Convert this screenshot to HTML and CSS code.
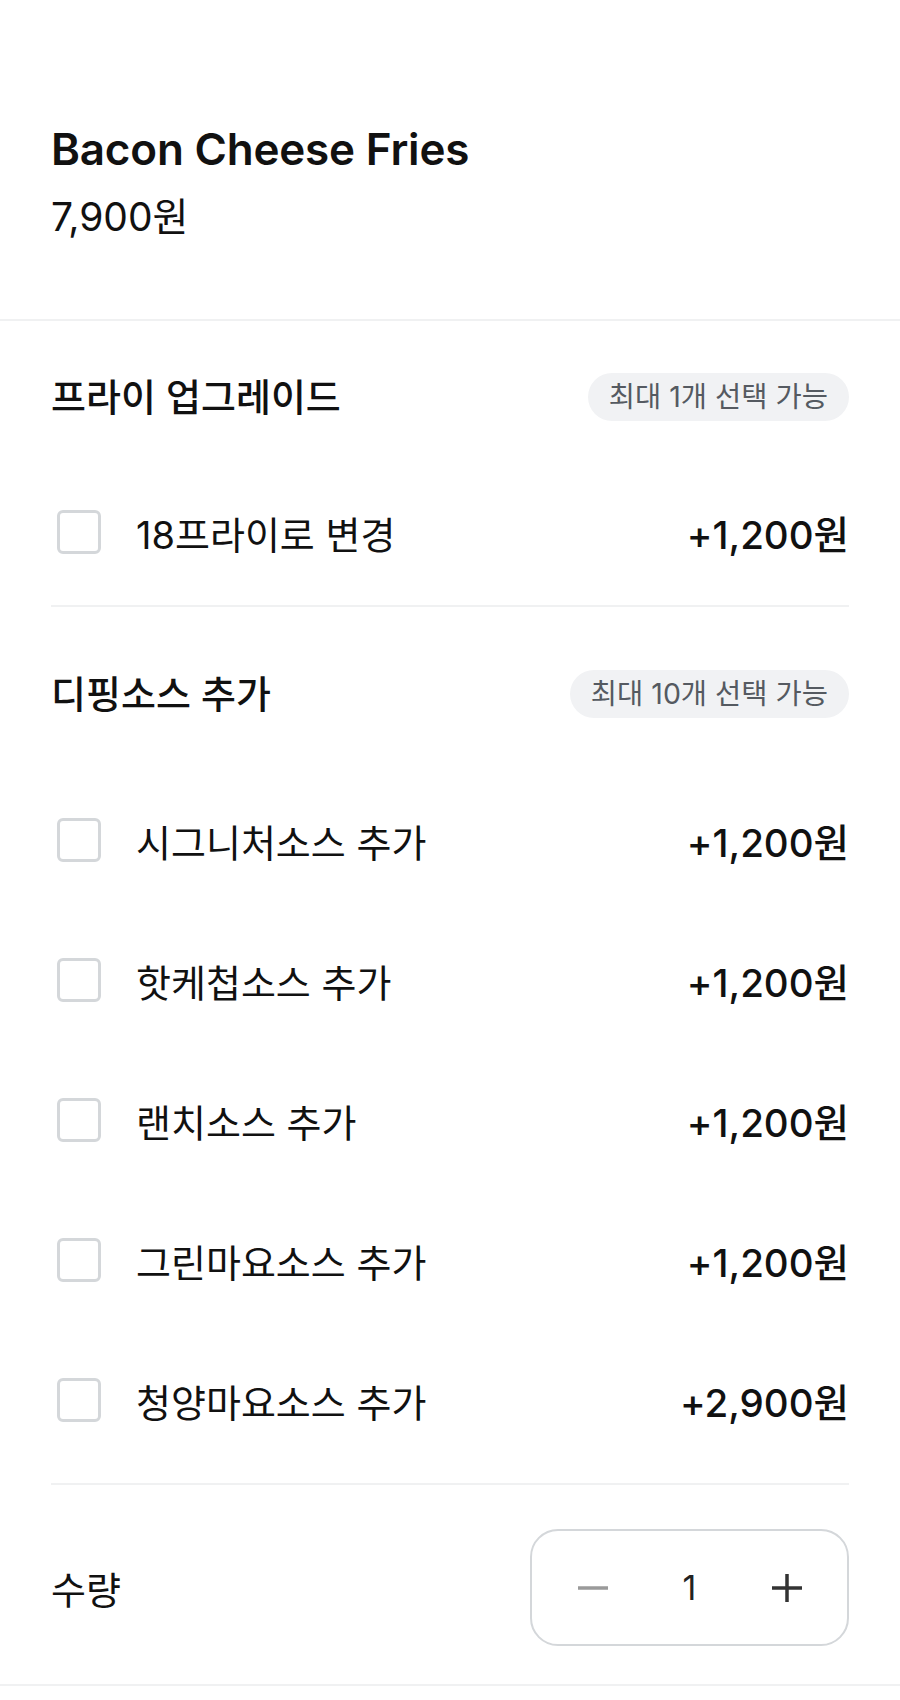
FILE: index.html
```html
<!DOCTYPE html>
<html lang="ko">
<head>
    <meta charset="UTF-8">
    <meta name="viewport" content="width=device-width, initial-scale=1.0">
    <title>Bacon Cheese Fries</title>
    <link rel="stylesheet" href="styles.css">
</head>
<body>
    <div class="menu-header">
        <h1 class="menu-name">Bacon Cheese Fries</h1>
        <p class="menu-price">7,900원</p>
    </div>

    <div class="option-group group-first">
        <div class="group-head">
            <h2>프라이 업그레이드</h2>
            <span class="limit-pill">최대 1개 선택 가능</span>
        </div>
        <ul class="option-list">
            <li class="option-row">
                <span class="check"></span>
                <span class="option-name">18프라이로 변경</span>
                <span class="option-price">+1,200원</span>
            </li>
        </ul>
    </div>

    <div class="option-group group-second">
        <div class="group-head">
            <h2>디핑소스 추가</h2>
            <span class="limit-pill">최대 10개 선택 가능</span>
        </div>
        <ul class="option-list">
            <li class="option-row">
                <span class="check"></span>
                <span class="option-name">시그니처소스 추가</span>
                <span class="option-price">+1,200원</span>
            </li>
            <li class="option-row">
                <span class="check"></span>
                <span class="option-name">핫케첩소스 추가</span>
                <span class="option-price">+1,200원</span>
            </li>
            <li class="option-row">
                <span class="check"></span>
                <span class="option-name">랜치소스 추가</span>
                <span class="option-price">+1,200원</span>
            </li>
            <li class="option-row">
                <span class="check"></span>
                <span class="option-name">그린마요소스 추가</span>
                <span class="option-price">+1,200원</span>
            </li>
            <li class="option-row">
                <span class="check"></span>
                <span class="option-name">청양마요소스 추가</span>
                <span class="option-price">+2,900원</span>
            </li>
        </ul>
    </div>

    <div class="qty-row">
        <span class="qty-label">수량</span>
        <div class="stepper">
            <button type="button" class="step-btn minus" aria-label="빼기">
                <svg width="32" height="32" viewBox="0 0 32 32"><path d="M1 16h30" stroke="#9a9a9a" stroke-width="3.5" stroke-linecap="butt"/></svg>
            </button>
            <span class="qty-value">1</span>
            <button type="button" class="step-btn plus" aria-label="더하기">
                <svg width="32" height="32" viewBox="0 0 32 32"><path d="M1 16h30M16 2v28" stroke="#333" stroke-width="3.5" stroke-linecap="butt"/></svg>
            </button>
        </div>
    </div>
</body>
</html>
```

FILE: styles.css
```css
:root {
    --text-main: #111111;
    --text-sub: #555a61;
    --line-color: #f0f1f2;
    --pill-bg: #f1f2f4;
    --box-border: #d4d7da;
}

* {
    margin: 0;
    padding: 0;
    box-sizing: border-box;
    font-family: 'Inter', 'Noto Sans CJK KR', sans-serif;
}

body {
    background: #fff;
    color: var(--text-main);
    width: 900px;
}

.menu-header {
    padding: 121px 51px 77px;
    border-bottom: 2px solid var(--line-color);
}

.menu-name {
    font-size: 44px;
    line-height: 56px;
    font-weight: 600;
    letter-spacing: -0.2px;
}

.menu-price {
    margin-top: 15px;
    font-size: 39px;
    line-height: 50px;
    font-weight: 400;
}

.option-group {
    margin: 0 51px;
    border-bottom: 2px solid var(--line-color);
}

.group-first {
    padding-top: 52px;
    padding-bottom: 3px;
}

.group-second {
    padding-top: 63px;
    padding-bottom: 13px;
}

.group-head {
    display: flex;
    justify-content: space-between;
    align-items: center;
    height: 48px;
}

.group-head h2 {
    font-size: 38px;
    font-weight: 500;
    line-height: 48px;
}

.limit-pill {
    background: var(--pill-bg);
    color: var(--text-sub);
    font-size: 28.5px;
    line-height: 48px;
    padding: 0 21px;
    border-radius: 24px;
}

.option-list {
    list-style: none;
}

.group-first .option-list {
    margin-top: 41px;
}

.group-second .option-list {
    margin-top: 52px;
}

.option-row {
    display: flex;
    align-items: center;
    height: 140px;
}

.check {
    width: 44px;
    height: 44px;
    margin-left: 6px;
    border: 3.5px solid var(--box-border);
    border-radius: 6px;
    flex-shrink: 0;
}

.option-name {
    margin-left: 35px;
    font-size: 38px;
    flex: 1;
}

.option-price {
    font-size: 38.5px;
    font-weight: 500;
}

.qty-row {
    display: flex;
    justify-content: space-between;
    align-items: center;
    padding: 44px 51px 38px;
    border-bottom: 2px solid var(--line-color);
}

.qty-label {
    font-size: 38px;
}

.stepper {
    display: grid;
    grid-template-columns: repeat(3, 1fr);
    align-items: center;
    width: 319px;
    height: 117px;
    padding: 0 12px;
    border: 2px solid var(--box-border);
    border-radius: 28px;
}

.step-btn {
    display: flex;
    justify-content: center;
    align-items: center;
    background: none;
    border: none;
}

.qty-value {
    text-align: center;
    font-size: 34px;
    color: #222;
}
```
